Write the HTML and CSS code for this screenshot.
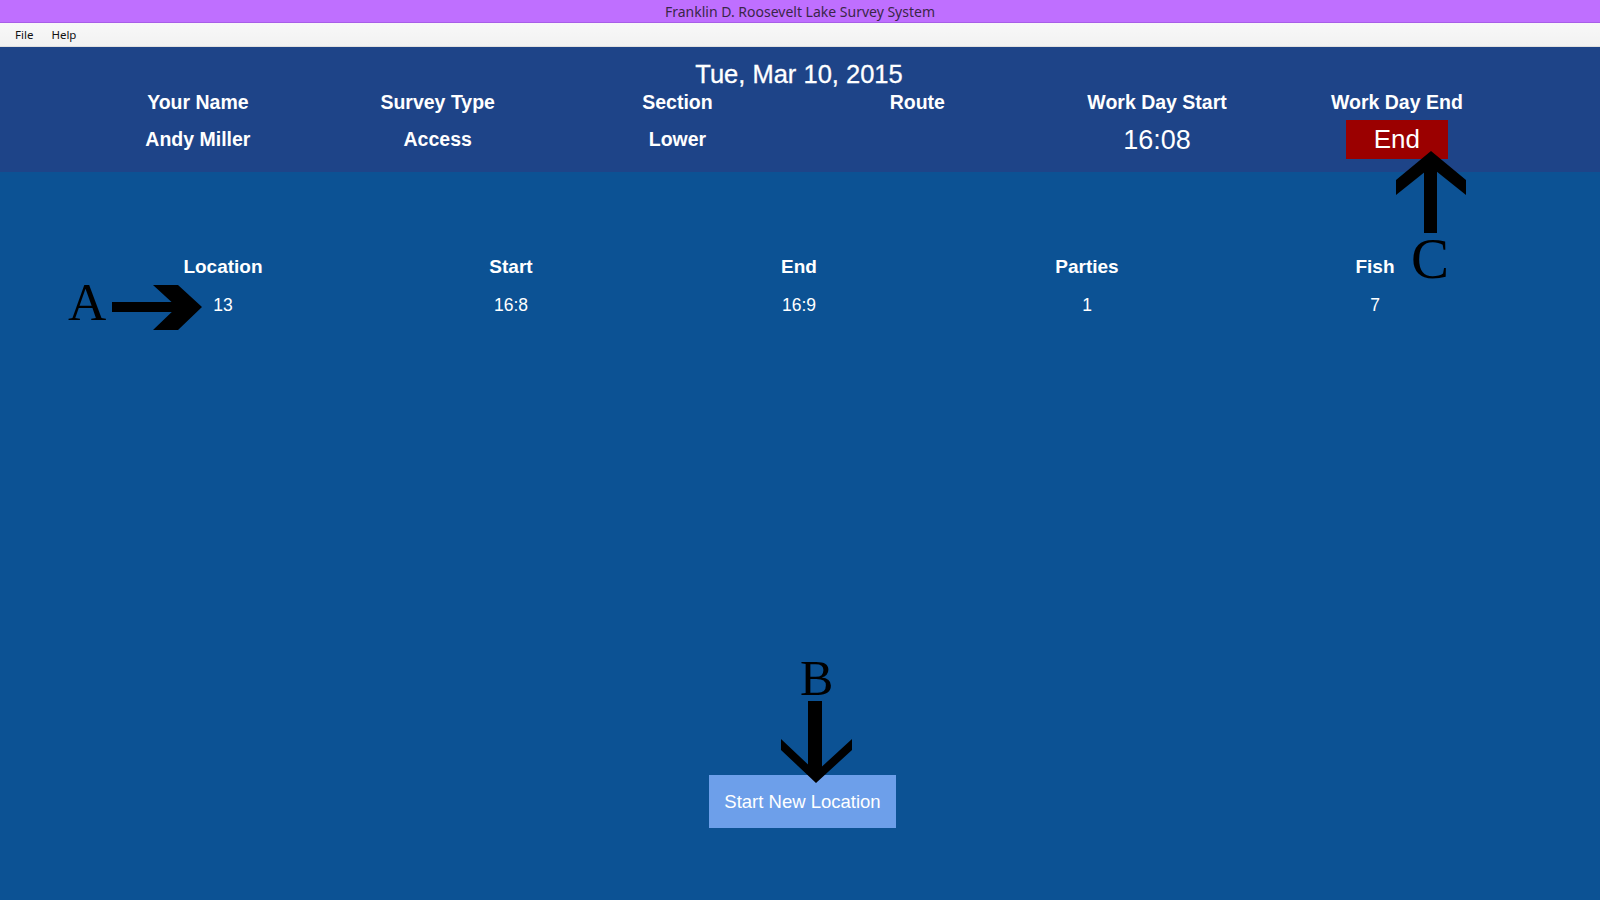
FILE: index.html
```html
<!DOCTYPE html>
<html>
<head>
<meta charset="utf-8">
<title>Franklin D. Roosevelt Lake Survey System</title>
<link rel="stylesheet" href="styles.css">
</head>
<body>
<div class="window">
  <div class="titlebar">Franklin D. Roosevelt Lake Survey System</div>
  <div class="menubar">
    <span class="menu-item">File</span>
    <span class="menu-item">Help</span>
  </div>
  <header class="header">
    <div class="date">Tue, Mar 10, 2015</div>
    <div class="info-grid">
      <div class="info-label">Your Name</div>
      <div class="info-label">Survey Type</div>
      <div class="info-label">Section</div>
      <div class="info-label">Route</div>
      <div class="info-label">Work Day Start</div>
      <div class="info-label">Work Day End</div>
      <div class="info-value">Andy Miller</div>
      <div class="info-value">Access</div>
      <div class="info-value">Lower</div>
      <div class="info-value"></div>
      <div class="info-value time">16:08</div>
      <div class="info-value"><button class="end-btn">End</button></div>
    </div>
  </header>
  <main class="main">
    <div class="loc-table">
      <div class="th">Location</div>
      <div class="th">Start</div>
      <div class="th">End</div>
      <div class="th">Parties</div>
      <div class="th">Fish</div>
      <div class="td">13</div>
      <div class="td">16:8</div>
      <div class="td">16:9</div>
      <div class="td">1</div>
      <div class="td">7</div>
    </div>
    <div class="actions">
      <button class="new-btn">Start New Location</button>
    </div>
  </main>
  <svg class="annotations" width="1600" height="900" viewBox="0 0 1600 900">
    <g fill="#000">
      <rect x="112" y="302" width="66" height="10"/>
      <polygon points="153,285 178,285 202,307 178,330 153,330 177,307"/>
      <rect x="808" y="701" width="14" height="72"/>
      <polygon points="781,739 816,772 852,739 852,750 816,783 781,750"/>
      <rect x="1424" y="166" width="13" height="67"/>
      <polygon points="1431,151 1466,180 1466,195 1431,167 1396,195 1396,180"/>
    </g>
    <text class="anno-letter" x="68" y="320" font-size="53">A</text>
    <text class="anno-letter" x="800" y="695" font-size="50">B</text>
    <text class="anno-letter" x="1411" y="278" font-size="57">C</text>
  </svg>
</div>
</body>
</html>
```

FILE: styles.css
```css
html, body {
  margin: 0;
  padding: 0;
}
body {
  width: 1600px;
  height: 900px;
  overflow: hidden;
  background: #0c5294;
  font-family: "Liberation Sans", Arial, sans-serif;
}
.window {
  position: relative;
  width: 1600px;
  height: 900px;
  display: flex;
  flex-direction: column;
}
.titlebar {
  height: 23px;
  background: #bf6fff;
  color: #3a2648;
  font-family: "Noto Sans", "Open Sans", sans-serif;
  font-size: 14px;
  display: flex;
  align-items: center;
  justify-content: center;
  box-sizing: border-box;
  border-bottom: 1px solid #a85ee8;
}
.menubar {
  height: 24px;
  background: linear-gradient(#f8f8f8, #f2f2f2);
  border-bottom: 1px solid #e0e0e0;
  display: flex;
  align-items: center;
  padding-left: 15px;
  gap: 18px;
  font-family: "Noto Sans", "Open Sans", sans-serif;
  font-size: 11.5px;
  color: #111;
  box-sizing: border-box;
}
.header {
  background: #1e4488;
  height: 125px;
  box-sizing: border-box;
  padding: 13px 80px 0 78px;
  color: #fff;
}
.date {
  height: 29px;
  line-height: 29px;
  text-align: center;
  font-size: 25.5px;
  font-weight: normal;
  -webkit-text-stroke: 0.3px #fff;
}
.info-grid {
  display: grid;
  grid-template-columns: repeat(6, 239.8px);
  grid-template-rows: 26px 39px;
  row-gap: 5px;
}
.info-label, .info-value {
  display: flex;
  align-items: center;
  justify-content: center;
  font-size: 19.5px;
  font-weight: bold;
}
.info-value.time {
  font-weight: normal;
  font-size: 27px;
  padding-top: 2px;
}
.end-btn {
  width: 102px;
  height: 39px;
  border: 0;
  margin: 0;
  padding: 0;
  background: #9b0000;
  color: #fff;
  font-family: "Liberation Sans", Arial, sans-serif;
  font-size: 26px;
}
.main {
  flex: 1;
  display: flex;
  flex-direction: column;
  color: #fff;
}
.loc-table {
  margin: 83px 0 0 79px;
  display: grid;
  grid-template-columns: repeat(5, 288px);
  grid-template-rows: 24px 24px;
  row-gap: 14px;
}
.th, .td {
  display: flex;
  align-items: center;
  justify-content: center;
}
.th {
  font-size: 19px;
  font-weight: bold;
}
.td {
  font-size: 17.5px;
}
.actions {
  margin-top: 458px;
  display: flex;
  justify-content: center;
  padding-left: 5px;
}
.new-btn {
  width: 187px;
  height: 53px;
  border: 0;
  margin: 0;
  padding: 1px 0 0 0;
  background: #6d9fea;
  color: #fff;
  font-family: "Liberation Sans", Arial, sans-serif;
  font-size: 18.5px;
}
.annotations {
  position: absolute;
  left: 0;
  top: 0;
  pointer-events: none;
}
.anno-letter {
  font-family: "Liberation Serif", "Times New Roman", serif;
  fill: #000;
}
```
